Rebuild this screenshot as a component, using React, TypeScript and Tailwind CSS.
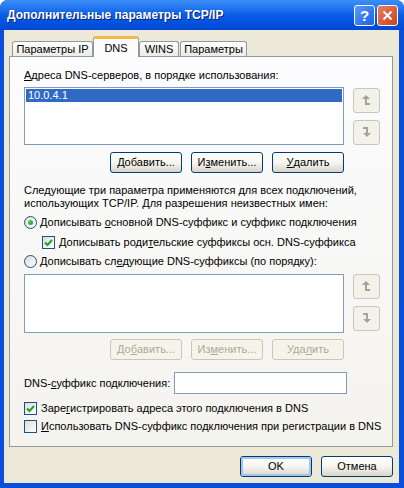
import type { ReactNode } from 'react';

const font = { fontFamily: '"Liberation Sans", Arial, sans-serif' };

// underlined access key letter
function U({ children }: { children: ReactNode }) {
  return <span className="underline underline-offset-[1px]">{children}</span>;
}

function XpButton({ children, disabled, primary }: { children: ReactNode; disabled?: boolean; primary?: boolean }) {
  if (disabled) {
    return (
      <div className="w-[72px] h-[21px] rounded-[3px] border border-[#C9C7BA] bg-[#F5F4EA] text-[#ACA899] flex items-center justify-center">
        {children}
      </div>
    );
  }
  return (
    <div className="w-[72px] h-[21px] rounded-[3px] border border-[#003C74] bg-gradient-to-b from-white via-[#F6F5F0] to-[#D9D5CA] flex items-center justify-center text-black">
      <div
        className={
          'w-full h-full rounded-[2px] flex items-center justify-center ' +
          (primary ? 'border-2 border-[#A6C4F2]' : 'border border-transparent')
        }
      >
        {children}
      </div>
    </div>
  );
}

function ArrowButton({ dir, className }: { dir: 'up' | 'down'; className?: string }) {
  return (
    <div className={'w-[27px] h-[25px] rounded-[3px] border border-[#C9C7BA] bg-[#F2F1EA] flex items-center justify-center ' + (className ?? '')}>
      <svg width="9" height="11" viewBox="0 0 9 11" fill="#A8A494">
        {dir === 'up' ? (
          <path d="M4 0 L8 4 L5 4 L5 8 L8 8 L8 10 L3 10 L3 4 L0 4 Z" />
        ) : (
          <path d="M1 0 L6 0 L6 6 L9 6 L5 10 L1 6 L4 6 L4 2 L1 2 Z" />
        )}
      </svg>
    </div>
  );
}

function Check({ checked }: { checked?: boolean }) {
  return (
    <div className="w-[13px] h-[13px] border border-[#1C5180] bg-gradient-to-br from-[#DCDCD7] to-white flex items-center justify-center shrink-0">
      {checked && (
        <svg width="9" height="9" viewBox="0 0 9 9">
          <path d="M1 4.5 L3.5 7 L8 2" stroke="#21A121" strokeWidth="2" fill="none" />
        </svg>
      )}
    </div>
  );
}

function Radio({ checked }: { checked?: boolean }) {
  return (
    <div className="w-[13px] h-[13px] rounded-full border border-[#1C5180] bg-gradient-to-br from-[#DCDCD7] to-white flex items-center justify-center shrink-0">
      {checked && <div className="w-[5px] h-[5px] rounded-full bg-gradient-to-br from-[#55D94F] to-[#1C9A1C]" />}
    </div>
  );
}

function ListWithArrows({ children, first }: { children?: ReactNode; first?: boolean }) {
  return (
    <div className="flex">
      <div className={'w-[320px] border border-[#7F9DB9] bg-white p-[1px] ' + (first ? 'h-[58px]' : 'h-[59px]')}>{children}</div>
      <div className={'ml-[9px] flex flex-col ' + (first ? 'pt-[1px]' : '')}>
        <ArrowButton dir="up" />
        <ArrowButton dir="down" className="mt-[7px]" />
      </div>
    </div>
  );
}

export default function App() {
  return (
    <div className="w-[404px] h-[488px] bg-[#0A4FDB] rounded-t-[8px] flex flex-col text-[11px] leading-[13px] whitespace-nowrap" style={font}>
      {/* Title bar */}
      <div className="h-[30px] rounded-t-[8px] bg-gradient-to-b from-[#3C8FF8] via-[#0A5DE6] to-[#0047D4] flex items-center pl-[7px] pr-[6px] shrink-0">
        <span className="text-white font-bold text-[12px] [text-shadow:1px_1px_0_#0A1E7A] flex-1">
          Дополнительные параметры TCP/IP
        </span>
        <div className="flex gap-[2px]">
          <div className="w-[21px] h-[21px] rounded-[3px] border border-white bg-gradient-to-br from-[#5A9BFC] to-[#1A5FE8] flex items-center justify-center text-white font-bold text-[15px]">
            ?
          </div>
          <div className="w-[21px] h-[21px] rounded-[3px] border border-white bg-gradient-to-br from-[#E9805F] to-[#C9401E] flex items-center justify-center">
            <svg width="11" height="11" viewBox="0 0 11 11">
              <path d="M1.5 1.5 L9.5 9.5 M9.5 1.5 L1.5 9.5" stroke="white" strokeWidth="2" />
            </svg>
          </div>
        </div>
      </div>

      {/* Dialog body */}
      <div className="flex-1 ml-[4px] mr-[5px] mb-[5px] bg-[#ECE9D8] flex flex-col pt-[6px]">
        {/* Tabs */}
        <div className="h-[20px] flex items-end pl-[8px] relative z-10">
          <div className="w-[81px] h-[15px] border border-b-0 border-[#919B9C] rounded-t-[3px] bg-gradient-to-b from-white to-[#ECEBE6] flex items-center justify-center">
            Параметры IP
          </div>
          <div className="w-[46px] h-[21px] -mb-[1px] border border-b-0 border-[#919B9C] border-t-[#F5B845] border-t-[3px] rounded-t-[3px] bg-[#FCFCFE] flex items-center justify-center">
            DNS
          </div>
          <div className="w-[40px] h-[15px] border border-b-0 border-[#919B9C] rounded-t-[3px] bg-gradient-to-b from-white to-[#ECEBE6] flex items-center justify-center">
            WINS
          </div>
          <div className="w-[67px] h-[15px] ml-[1px] border border-b-0 border-[#919B9C] rounded-t-[3px] bg-gradient-to-b from-white to-[#ECEBE6] flex items-center justify-center">
            Параметры
          </div>
        </div>

        {/* Tab page */}
        <div className="ml-[5px] w-[384px] h-[391px] border border-[#919B9C] bg-gradient-to-b from-[#FCFCFE] to-[#F4F3EE] pl-[14px] pt-[12px] flex flex-col">
          <div className="h-[13px]">
            <U>А</U>дреса DNS-серверов, в порядке использования:
          </div>
          <div className="mt-[5px]">
            <ListWithArrows first>
              <div className="h-[13px] bg-[#316AC5] text-white pl-[2px] leading-[13px]">10.0.4.1</div>
            </ListWithArrows>
          </div>
          <div className="mt-[7px] flex gap-[9px] pl-[86px]">
            <XpButton>
              <U>Д</U>обавить...
            </XpButton>
            <XpButton>
              И<U>з</U>менить...
            </XpButton>
            <XpButton>
              <U>У</U>далить
            </XpButton>
          </div>

          <div className="mt-[11px]">
            Следующие три параметра применяются для всех подключений,
            <br />
            использующих TCP/IP. Для разрешения неизвестных имен:
          </div>

          <div className="mt-[3px] h-[19px] flex items-center gap-[3px]">
            <Radio checked />
            <span>
              Дописывать <U>о</U>сновной DNS-суффикс и суффикс подключения
            </span>
          </div>
          <div className="h-[20px] flex items-center gap-[4px] pl-[18px]">
            <Check checked />
            <span>
              Дописывать роди<U>т</U>ельские суффиксы осн. DNS-суффикса
            </span>
          </div>
          <div className="h-[19px] flex items-center gap-[3px]">
            <Radio />
            <span>
              Дописывать сл<U>е</U>дующие DNS-суффиксы (по порядку):
            </span>
          </div>

          <div className="mt-[3px]">
            <ListWithArrows />
          </div>
          <div className="mt-[6px] flex gap-[9px] pl-[86px]">
            <XpButton disabled>
              До<U>б</U>авить...
            </XpButton>
            <XpButton disabled>
              Из<U>м</U>енить...
            </XpButton>
            <XpButton disabled>
              Уда<U>л</U>ить
            </XpButton>
          </div>

          <div className="mt-[12px] flex items-center">
            <span className="w-[150px]">
              DNS-<U>с</U>уффикс подключения:
            </span>
            <div className="w-[173px] h-[22px] border border-[#7F9DB9] bg-white" />
          </div>

          <div className="mt-[5px] h-[18px] flex items-center gap-[4px]">
            <Check checked />
            <span>
              Заре<U>г</U>истрировать адреса этого подключения в DNS
            </span>
          </div>
          <div className="h-[18px] flex items-center gap-[4px]">
            <Check />
            <span>
              <U>И</U>спользовать DNS-суффикс подключения при регистрации в DNS
            </span>
          </div>
        </div>

        {/* Dialog buttons */}
        <div className="mt-[9px] flex justify-end gap-[9px] pr-[6px]">
          <XpButton primary>OK</XpButton>
          <XpButton>Отмена</XpButton>
        </div>
      </div>
    </div>
  );
}
